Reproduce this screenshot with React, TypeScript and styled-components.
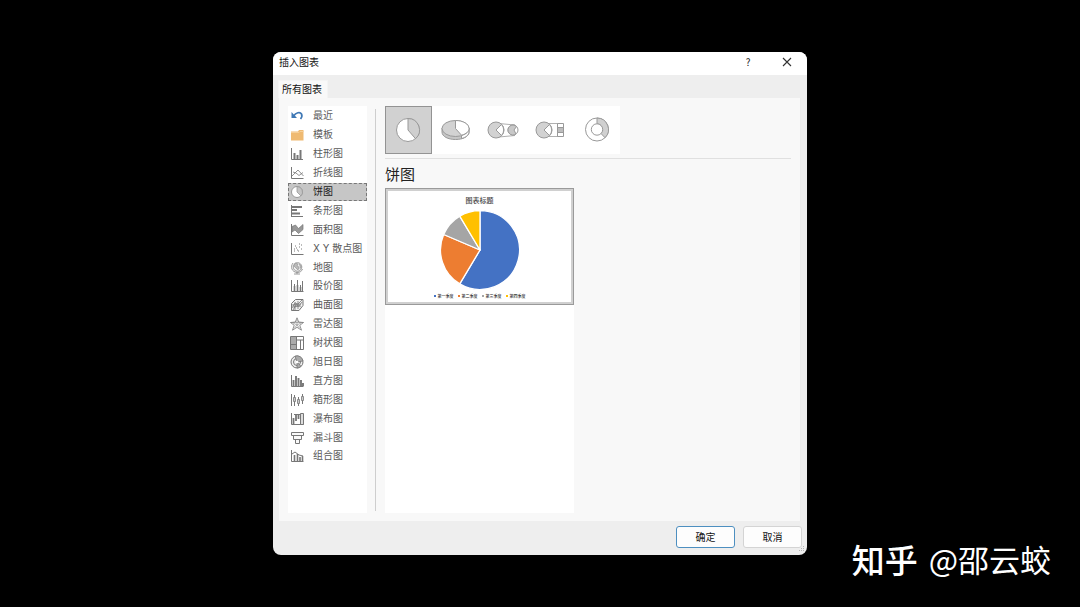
import React, { useState } from 'react';
import styled, { createGlobalStyle } from 'styled-components';

const GlobalStyle = createGlobalStyle`
  *, *::before, *::after { box-sizing: border-box; }
  body {
    margin: 0;
    background: #000;
    color: #222;
    font-family: 'Noto Sans CJK SC', 'Noto Sans', sans-serif;
    font-size: 10px;
    line-height: 16px;
  }
  button { font: inherit; color: inherit; margin: 0; padding: 0; }
`;

const Page = styled.main`
  position: relative;
  min-height: 100vh;
  display: flex;
  align-items: center;
  justify-content: center;
`;

const Dialog = styled.section`
  position: relative;
  width: 100%;
  max-width: 534px;
  display: flex;
  flex-direction: column;
  border-radius: 8px;
  overflow: hidden;
  background: #eeeeee;
`;

const TitleBar = styled.header`
  display: flex;
  align-items: center;
  height: 23px;
  padding: 0 8px 3px 6px;
  background: #fff;
`;

const Title = styled.h1`
  flex: 1;
  margin: 0;
  font-size: 10px;
  line-height: 20px;
  font-weight: 400;
  color: #111;
`;

const WindowButton = styled.button`
  display: flex;
  align-items: center;
  justify-content: center;
  width: 24px;
  height: 20px;
  margin-left: 15px;
  border: 0;
  background: none;
  color: #222;
`;

const Tabs = styled.div`
  display: flex;
  padding: 5px 5px 0;
`;

const Tab = styled.button`
  height: 18px;
  padding: 0 5px 2px 3px;
  border: 1px solid #f4f4f4;
  border-bottom: 0;
  background: #f9f9f9;
  line-height: 16px;
  color: #111;
`;

const Panel = styled.div`
  display: flex;
  margin: 0 6px;
  padding: 8px 9px 8px 9px;
  background: #f8f8f8;
  border-right: 1px solid #ececec;
`;

const Sidebar = styled.nav`
  width: 79px;
  height: 407px;
  background: #fff;
`;

const TypeList = styled.ul`
  display: flex;
  flex-direction: column;
  height: 360px;
  margin: 0;
  padding: 1px 0 0;
  list-style: none;
`;

const TypeItem = styled.li`
  flex: 1;
  display: flex;
`;

const TypeButton = styled.button<{ $active: boolean }>`
  flex: 1;
  display: flex;
  align-items: center;
  gap: 9px;
  padding-left: 1px;
  border: 1px ${p => (p.$active ? 'dashed #777' : 'solid transparent')};
  background: ${p => (p.$active ? '#c6c6c6' : 'transparent')};
  color: ${p => (p.$active ? '#222' : '#5a5a5a')};
  font-family: 'DejaVu Sans', 'Noto Sans CJK SC', sans-serif;
  white-space: nowrap;
  line-height: 16px;
`;

const Divider = styled.div`
  width: 1px;
  margin: 3px 9px 2px 8px;
  background: #cecece;
`;

const Content = styled.div`
  flex: 1;
  display: flex;
  flex-direction: column;
  align-items: flex-start;
`;

const Variants = styled.div`
  display: flex;
  background: #fff;
`;

const VariantButton = styled.button<{ $active: boolean }>`
  display: flex;
  align-items: center;
  justify-content: center;
  width: 47px;
  height: 48px;
  border: 1px solid ${p => (p.$active ? '#939393' : 'transparent')};
  background: ${p => (p.$active ? '#d1d1d1' : 'transparent')};
`;

const Rule = styled.hr`
  width: 100%;
  height: 1px;
  margin: 4px 0 0;
  border: 0;
  background: #e0e0e0;
`;

const Heading = styled.h2`
  margin: 2px 0 1px;
  font-size: 15px;
  line-height: 26px;
  font-weight: 400;
  color: #222;
`;

const Previews = styled.div`
  flex: 1;
  width: 189px;
  background: #fff;
`;

const Preview = styled.button`
  display: flex;
  flex-direction: column;
  align-items: center;
  width: 100%;
  height: 117px;
  padding-top: 5px;
  border: 1px solid #9a9a9a;
  background: #fff;
  box-shadow: inset 0 0 0 2px #d0d0d0;
`;

const ChartTitle = styled.span`
  margin-bottom: 4px;
  font-size: 7px;
  line-height: 12px;
  font-weight: 500;
  color: #444;
`;

const Legend = styled.span`
  display: flex;
  gap: 4px;
  margin-top: 2px;
  font-size: 4px;
  line-height: 8px;
  font-weight: 500;
  color: #222;
`;

const LegendItem = styled.span<{ $color: string }>`
  display: flex;
  align-items: center;
  gap: 2px;
  &::before {
    content: '';
    width: 2px;
    height: 2px;
    background: ${p => p.$color};
  }
`;

const Footer = styled.footer`
  display: flex;
  justify-content: flex-end;
  gap: 8px;
  padding: 5px 5px 7px;
`;

const ActionButton = styled.button<{ $primary?: boolean }>`
  width: 59px;
  height: 22px;
  border: 1px solid ${p => (p.$primary ? '#4d8fc0' : '#d4d4d4')};
  border-radius: 3px;
  background: #fdfdfd;
  color: #111;
  line-height: 18px;
`;

const Grip = styled.svg`
  position: absolute;
  right: 1px;
  bottom: 1px;
`;

const Watermark = styled.div`
  position: absolute;
  right: 29px;
  bottom: 26px;
  display: flex;
  align-items: center;
  gap: 11px;
  color: #fff;
  font-size: 31px;
  line-height: 44px;
  white-space: nowrap;
`;

const Brand = styled.strong`
  font-size: 33px;
  font-weight: 500;
`;

const typeIcons: Record<string, React.ReactNode> = {
  最近: (
    <>
      <path d="M1.500 3v6h5.500z" fill="#3f78b5" stroke="none" />
      <path d="M3.500 7C6 3.500 10 2.500 11.500 5c.9 1.800.2 3.600-1 5" fill="none" stroke="#3f78b5" strokeWidth="1.700" />
    </>
  ),
  模板: (
    <>
      <path d="M1 3.500h7l1-1.500h4.500v10.500H1z" fill="#efba72" stroke="none" />
      <path d="M1 4.500h8l1-1h3.500" stroke="#f6cf98" />
    </>
  ),
  柱形图: (
    <>
      <path d="M1.500 1v11.500H13" />
      <path d="M4.500 6v6M7.500 8v4M10.500 3v9" strokeWidth="2" />
    </>
  ),
  折线图: (
    <>
      <path d="M1.500 1v11.500H13.500" />
      <path d="M2 10l6-6 5.500 6M3 6l3 1 3 2.500 4-3" strokeWidth=".8" />
    </>
  ),
  饼图: (
    <>
      <circle cx="7" cy="7" r="5.500" fill="#fff" stroke="#999" />
      <path d="M7 7V1.500A5.500 5.500 0 0 1 10.900 10.900z" fill="#c4c4c4" stroke="#999" strokeWidth=".8" />
    </>
  ),
  条形图: (
    <>
      <path d="M1.500 1v12M2 12.500h11" />
      <path d="M2 3h10M2 6h5M2 9.500h8" strokeWidth="2" />
    </>
  ),
  面积图: (
    <>
      <path d="M1.500 1v11.500H13.500" />
      <path d="M2 3.500l3.500-1.500 3 3.500L13 1.500v5L8.500 10.500 5 7 2 9z" fill="#999" strokeWidth=".7" />
    </>
  ),
  'X Y 散点图': (
    <>
      <path d="M1.500 1v11.500H13.500" />
      <path d="M4 9h1M6 6h1M5 4h1M8 9h1M9 5h1M11 3h1M11 7h1M7 8h1M4 7h1M9 2h1" />
    </>
  ),
  地图: (
    <>
      <circle cx="7.500" cy="6" r="4.300" fill="#eee" stroke="#999" />
      <path d="M5 2l3 1-1 2 2 1-1 3-2-2-2-2zM9 3l2 2-1 3" fill="#bbb" stroke="#999" strokeWidth=".7" />
      <path d="M3 2C0 6 2 11 7 11.500 10 11.500 12 10 12.500 8M7 11v2M4 13h6" stroke="#999" />
    </>
  ),
  股价图: (
    <>
      <path d="M1.500 1v11.500H13.500M4.500 5v7M7.500 1v11M10.500 6v6M12.500 2v10" />
      <path d="M4.500 7v5M7.500 6v6M10.500 8v4" strokeWidth="1.600" />
    </>
  ),
  曲面图: (
    <>
      <path d="M1.500 5.500l4-4h7.500v6l-4 5h-7.500z" fill="#f2f2f2" />
      <path d="M2 10l3-5 3 1 4-4M3 12l3-5 3 1 3-4M5 4v8M8 3v8M2 7l9-1M3 9l8-1" strokeWidth=".8" />
    </>
  ),
  雷达图: (
    <>
      <path d="M7 .8l1.700 4.200 4.800.5L9.800 8.300 11.500 13.200 7 10.300 2.500 13.200l1.700-4.900L.5 5.500 5.300 5z" fill="#f6f6f6" strokeWidth=".8" />
      <path d="M7 3v5M3 6l4 2 4-2M4.500 11L7 8l2.500 3M.5 5.500h13" strokeWidth=".5" />
    </>
  ),
  树状图: (
    <>
      <rect x="1" y="1" width="5" height="12" fill="#aaa" stroke="none" />
      <path d="M.5 .5h13v13H.5zM6.500 1v12M1 8.500h5M6.500 4h7M10.500 4v9" />
    </>
  ),
  旭日图: (
    <>
      <circle cx="7" cy="7" r="6" fill="#eee" />
      <circle cx="7" cy="7" r="3.500" />
      <path d="M7 7L5 1.200A6 6 0 0 1 13 6zM7 7l4 4.300a6 6 0 0 1-4 1.700z" fill="#aaa" strokeWidth=".8" />
      <circle cx="7" cy="7" r="1.300" fill="#fff" stroke="none" />
    </>
  ),
  直方图: (
    <>
      <path d="M1.500 1v11.500H13.500" />
      <path d="M3.500 6v6M6 2v10M8.500 4v8M11 6v6M13 9v3" strokeWidth="1.900" />
    </>
  ),
  箱形图: (
    <>
      <path d="M1.500 1v12M4.500 2v11M8.500 4v9M12.500 1v10" />
      <path d="M3.500 4.500h2v4h-2zM7.500 6.500h2v4h-2zM11.500 3.500h2v4h-2z" fill="#ccc" strokeWidth=".8" />
    </>
  ),
  瀑布图: (
    <>
      <path d="M1.500 1v11.500H13.500M4 2.500h8" />
      <path d="M3.500 6v6M6 2v7M8.500 2v5" strokeWidth="1.800" />
      <path d="M10.500 1.500h3v11h-3z" fill="#ddd" />
    </>
  ),
  漏斗图: <path d="M1.500 1.500h12v3h-12zM3.500 4.500h8v4h-8zM5.500 8.500h4v4h-4z" fill="#fafafa" />,
  组合图: (
    <>
      <path d="M1.500 1v11.500H13.500M2 5l3-2 4 3 4 1" />
      <path d="M4.500 6v6M7.500 5v7M10 8v4M12.500 7v5" strokeWidth="1.600" />
    </>
  ),
};

const variants = [
  {
    name: '饼图',
    art: (
      <>
        <circle cx="18" cy="14" r="11.500" fill="#fff" />
        <path d="M18 14V2.500A11.500 11.500 0 0 1 25.500 22.700z" fill="#cfcfcf" />
      </>
    ),
  },
  {
    name: '三维饼图',
    art: (
      <>
        <path d="M5 12v4c0 4.500 6 7.500 13.500 7.500s13.500-3 13.500-7.500v-4z" fill="#c6c6c6" />
        <path d="M24.500 18.800V22.600C29 21.200 32 19 32 16v-4z" fill="#fff" />
        <ellipse cx="18.500" cy="12.500" rx="13.500" ry="8" fill="#d2d2d2" />
        <path d="M18.500 12.500V4.500c7.500 0 13.500 3.500 13.500 8 0 3-2.500 5.300-7.500 6.700z" fill="#fff" />
      </>
    ),
  },
  {
    name: '子母饼图',
    art: (
      <>
        <path d="M15 7.500L31 9M15 21l16-1.500" stroke="#b0b0b0" />
        <circle cx="12" cy="14" r="8" fill="#d2d2d2" />
        <path d="M12 14l5.500-5.500a8 8 0 0 1 0 11z" fill="#fff" />
        <circle cx="29" cy="14" r="5" fill="#fff" />
        <path d="M30 14l2.500-3.500A5 5 0 1 0 32 18z" fill="#c8c8c8" />
      </>
    ),
  },
  {
    name: '复合条饼图',
    art: (
      <>
        <path d="M15 7.500h12M15 20.500h12" stroke="#b0b0b0" />
        <circle cx="13" cy="14" r="8" fill="#d2d2d2" />
        <path d="M13 14l5.500-5.500a8 8 0 0 1 0 11z" fill="#fff" />
        <path d="M26.500 7.500h6v13h-6z" fill="#fff" />
        <path d="M26.500 11.500h6v5h-6z" fill="#bdbdbd" />
      </>
    ),
  },
  {
    name: '圆环图',
    art: (
      <>
        <circle cx="19" cy="13.500" r="11.500" fill="#fff" />
        <path d="M19 2a11.500 11.500 0 0 1 8 19.700l-4-4.200A5.700 5.700 0 0 0 19 7.800z" fill="#d0d0d0" />
        <circle cx="19" cy="13.500" r="5.700" fill="#fff" />
      </>
    ),
  },
];

const quarters = [
  { label: '第一季度', value: 8.2, color: '#4472c4' },
  { label: '第二季度', value: 3.2, color: '#ed7d31' },
  { label: '第三季度', value: 1.4, color: '#a5a5a5' },
  { label: '第四季度', value: 1.2, color: '#ffc000' },
];

function PieChart() {
  const total = quarters.reduce((sum, q) => sum + q.value, 0);
  let start = 0;
  return (
    <svg width="80" height="80" viewBox="-40 -40 80 80" aria-hidden="true">
      {quarters.map(q => {
        const end = start + (q.value / total) * Math.PI * 2;
        const point = (a: number) => `${39.5 * Math.sin(a)} ${-39.5 * Math.cos(a)}`;
        const large = end - start > Math.PI ? 1 : 0;
        const d = `M0 0L${point(start)}A39.5 39.5 0 ${large} 1 ${point(end)}Z`;
        start = end;
        return <path key={q.label} d={d} fill={q.color} stroke="#fff" strokeWidth="1.3" strokeLinejoin="round" />;
      })}
    </svg>
  );
}

export default function App() {
  const [type, setType] = useState('饼图');
  const [variant, setVariant] = useState('饼图');
  return (
    <Page>
      <GlobalStyle />
      <Dialog role="dialog" aria-labelledby="dialog-title">
        <TitleBar>
          <Title id="dialog-title">插入图表</Title>
          <WindowButton type="button" aria-label="帮助">?</WindowButton>
          <WindowButton type="button" aria-label="关闭">
            <svg width="10" height="10" viewBox="0 0 10 10" aria-hidden="true">
              <path d="M1 1l8 8M9 1L1 9" stroke="#333" strokeWidth="1.100" />
            </svg>
          </WindowButton>
        </TitleBar>
        <Tabs role="tablist">
          <Tab type="button" role="tab" aria-selected="true">所有图表</Tab>
        </Tabs>
        <Panel>
          <Sidebar aria-label="图表类型">
            <TypeList>
              {Object.entries(typeIcons).map(([name, art]) => (
                <TypeItem key={name}>
                  <TypeButton type="button" $active={name === type} onClick={() => setType(name)}>
                    <svg width="14" height="14" viewBox="0 0 14 14" fill="none" stroke="#777" aria-hidden="true">
                      {art}
                    </svg>
                    {name}
                  </TypeButton>
                </TypeItem>
              ))}
            </TypeList>
          </Sidebar>
          <Divider />
          <Content>
            <Variants>
              {variants.map(v => (
                <VariantButton
                  key={v.name}
                  type="button"
                  aria-label={v.name}
                  $active={v.name === variant}
                  onClick={() => setVariant(v.name)}
                >
                  <svg width="38" height="28" viewBox="0 0 38 28" fill="none" stroke="#999" aria-hidden="true">
                    {v.art}
                  </svg>
                </VariantButton>
              ))}
            </Variants>
            <Rule />
            <Heading>饼图</Heading>
            <Previews>
              <Preview type="button">
                <ChartTitle>图表标题</ChartTitle>
                <PieChart />
                <Legend>
                  {quarters.map(q => (
                    <LegendItem key={q.label} $color={q.color}>{q.label}</LegendItem>
                  ))}
                </Legend>
              </Preview>
            </Previews>
          </Content>
        </Panel>
        <Footer>
          <ActionButton type="button" $primary>确定</ActionButton>
          <ActionButton type="button">取消</ActionButton>
        </Footer>
        <Grip width="8" height="8" viewBox="0 0 8 8" fill="#b5b5b5" aria-hidden="true">
          <path d="M5 0h1v1H5zM3 2h1v1H3zM5 2h1v1H5zM1 4h1v1H1zM3 4h1v1H3zM5 4h1v1H5z" />
        </Grip>
      </Dialog>
      <Watermark>
        <Brand>知乎</Brand>
        <span>@邵云蛟</span>
      </Watermark>
    </Page>
  );
}
